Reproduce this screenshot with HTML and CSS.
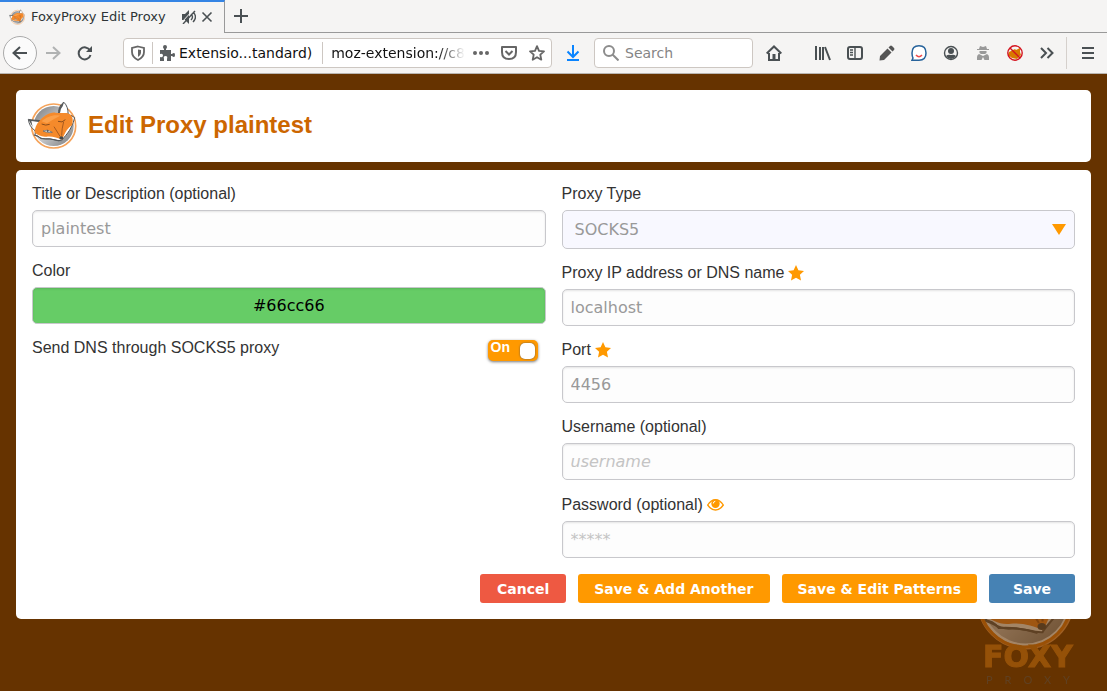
FILE: index.html
```html
<!DOCTYPE html>
<html lang="en">
<head>
    <meta charset="utf-8">
    <title>FoxyProxy Edit Proxy</title>
    <link rel="stylesheet" href="styles.css">
</head>
<body>
    <!-- shared fox logo -->
    <svg class="defs" width="0" height="0" aria-hidden="true">
        <defs>
            <linearGradient id="disc" x1="0" y1="0" x2="1" y2="1">
                <stop offset="0" stop-color="#77797b"/>
                <stop offset=".5" stop-color="#c9cacc"/>
                <stop offset="1" stop-color="#77797b"/>
            </linearGradient>
            <symbol id="fox" viewBox="50 48 150 150">
                <circle cx="130" cy="126" r="66" fill="#fff" stroke="#f5a35a" stroke-width="5"/>
                <circle cx="130" cy="126" r="60" fill="url(#disc)"/>
                <path d="M144 89C145 70 152 59 161 55C170 64 174 77 173 91Z" fill="#fff" stroke="#55585a" stroke-width="3"/>
                <path d="M144 86Q145 66 161 55L157 67Q150 74 149 87Z" fill="#55585a"/>
                <path d="M95 111C80 111 64 109 54 106C56 121 62 131 74 140Z" fill="#fff" stroke="#55585a" stroke-width="3"/>
                <path d="M54 106L98 109L86 114L63 111L67 129Z" fill="#55585a"/>
                <path d="M76 137L74 154C83 156 90 165 106 165C123 162 139 171 154 170C161 157 182 145 193 101L182 94Z" fill="#fff" stroke="#55585a" stroke-width="3"/>
                <path d="M88 110C100 97 117 84 135 86C153 90 168 83 179 91C188 98 189 110 185 124C174 130 164 144 156 167C141 161 124 156 109 158C94 160 80 153 73 145C73 132 78 120 88 110Z" fill="#f58a2b"/>
                <path d="M94 112C108 98 131 90 150 95C136 102 124 108 110 118Z" fill="#fba04a"/>
                <path d="M94 120Q106 126 118 121M143 112Q156 118 165 107" fill="none" stroke="#8a4d1c" stroke-width="3"/>
                <path d="M98 141Q111 134 126 145Q112 148 98 141Z" fill="#fff" stroke="#55585a" stroke-width="2"/>
                <circle cx="112" cy="141" r="3" fill="#55585a"/>
                <path d="M131 128L149 157M160 113Q154 135 154 155" fill="none" stroke="#a85b1f" stroke-width="3"/>
                <ellipse cx="153" cy="162" rx="6" ry="5" fill="#45484a"/>
                <path d="M70 153Q84 153 92 164Q119 162 147 171" fill="none" stroke="#55585a" stroke-width="3"/>
            </symbol>
        </defs>
    </svg>

    <nav class="tabs">
        <div class="tab">
            <svg class="icon" viewBox="50 48 150 150"><use href="#fox" x="50" y="48" width="150" height="150"/></svg>
            <span class="tab-title">FoxyProxy Edit Proxy</span>
            <button class="tab-button" aria-label="Unmute tab">
                <svg width="14" height="14" viewBox="0 0 14 14" fill="#4a5053"><path d="M0 4h3l4-4v14L3 10H0z"/><path d="M9 4q3 3 0 6M11 2q5 5 0 10M1 14L13 1" fill="none" stroke="#4a5053" stroke-width="1.4"/><path d="M0 12L11 0" stroke="#f5f4f3"/></svg>
            </button>
            <button class="tab-button" aria-label="Close tab">
                <svg width="12" height="12" viewBox="0 0 12 12" stroke="#4a5053" stroke-width="1.6"><path d="M1.500 1.500l9 9m0-9l-9 9"/></svg>
            </button>
        </div>
        <button class="new-tab" aria-label="New tab">
            <svg class="icon" viewBox="0 0 16 16" stroke="#4a5053" stroke-width="2"><path d="M8 1v14M1 8h14"/></svg>
        </button>
    </nav>

    <header class="toolbar">
        <button class="tool back" aria-label="Back"><svg class="icon" viewBox="0 0 16 16"><path class="line" d="M15 8H1m7-6L1.500 8 8 14"/></svg></button>
        <button class="tool forward" aria-label="Forward"><svg class="icon" viewBox="0 0 16 16"><path class="line" d="M1 8h14M8 2l6.500 6L8 14"/></svg></button>
        <button class="tool" aria-label="Reload"><svg class="icon" viewBox="0 0 16 16"><path class="line" d="M13 5.500A6 6 0 1 0 13.500 10"/><path d="M15 1v6H9z" fill="#4a5053"/></svg></button>

        <div class="address">
            <svg class="icon shield" viewBox="0 0 16 16"><path d="M8 1.500L14 3v4q0 5-6 8-6-3-6-8V3z" fill="none" stroke="#666" stroke-width="1.8"/><path d="M8 4.500L11 5v3q0 2-3 4z" fill="#666"/></svg>
            <span class="divider"></span>
            <svg class="icon" viewBox="0 0 16 16" fill="#5b5f61"><path d="M1 5h4V4Q4 3 4 2q0-2 2-2t2 2q0 1-1 2v1h5v4h1q1-1 2-1 1 0 1 2t-1 2q-1 0-2-1h-1v5H8v-2q1-3-1.500-3T5 14v2H1v-4q3 1 3-1.500T1 9z"/></svg>
            <span class="identity">Extensio...tandard)</span>
            <span class="divider"></span>
            <input class="url" type="text" aria-label="Address" value="moz-extension://c84d">
            <button class="inner" aria-label="Page actions"><svg class="icon" viewBox="0 0 16 16" fill="#666"><circle cx="2" cy="8" r="2"/><circle cx="8" cy="8" r="2"/><circle cx="14" cy="8" r="2"/></svg></button>
            <button class="inner" aria-label="Save to Pocket"><svg class="icon" viewBox="0 0 16 16" fill="none" stroke="#666" stroke-width="2"><path d="M1 2h14v5q0 7-7 7T1 7z" stroke-linejoin="round"/><path d="M4.500 6L8 9.500 11.500 6"/></svg></button>
            <button class="inner" aria-label="Bookmark"><svg class="icon" viewBox="0 0 16 16" fill="none" stroke="#666" stroke-width="1.8" stroke-linejoin="round"><path d="M8 1.200l2 4.600 5 .5-3.700 3.400 1 5L8 12.200l-4.300 2.500 1-5L1 6.300l5-.5z"/></svg></button>
        </div>

        <button class="tool" aria-label="Downloads"><svg class="icon" viewBox="0 0 16 16" fill="none" stroke="#0a84ff" stroke-width="2"><path d="M8 0v11M2.500 6.500L8 12l5.500-5.500M2 15h12"/></svg></button>

        <div class="search">
            <svg class="icon" viewBox="0 0 16 16" fill="none" stroke="#8c8c8c" stroke-width="2"><circle cx="6" cy="6" r="5"/><path d="M9.500 9.500L15.500 15.500"/></svg>
            <input type="text" aria-label="Search" placeholder="Search">
        </div>

        <button class="tool" aria-label="Home"><svg class="icon" viewBox="0 0 16 16"><path class="line" d="M.7 8.500L8 1.500l7.300 7M3 8v7h10V8"/><path d="M6.500 15V9h3v6z" fill="#4a5053"/></svg></button>
        <div class="addons">
            <button class="tool" aria-label="Library"><svg class="icon" viewBox="0 0 16 16"><path class="line" d="M1 1v14M5 2v13M8 2v13M10 2l5 13"/></svg></button>
            <button class="tool" aria-label="Sidebars"><svg class="icon" viewBox="0 0 16 16"><rect class="line" x="1" y="2" width="14" height="12" rx="2"/><path d="M8 2v12M3 5h3M3 7.500h3M3 10h3" stroke="#4a5053" stroke-width="1.400"/></svg></button>
            <button class="tool" aria-label="Edit"><svg class="icon" viewBox="0 0 16 16" fill="#555"><path d="M11 1q1-1 2 0l2 2q1 1 0 2l-1.500 1.500-4-4zM8.500 3.500l4 4L5 15l-4.500.5L1 11z"/></svg></button>
            <button class="tool" aria-label="Assistant"><svg class="icon" viewBox="0 0 16 16" fill="#fff"><path d="M1 15.200l1-2.200Q1 11 1 8q0-7.200 7-7.200T15 8t-7 7.200z" stroke="#27639b" stroke-width="1.500"/><path d="M5 10q3 3.500 6 0" fill="none" stroke="#ef4c4c" stroke-width="1.500"/></svg></button>
            <button class="tool" aria-label="Account"><svg class="icon" viewBox="0 0 16 16"><circle cx="8" cy="8" r="6.500" fill="none" stroke="#4a5053" stroke-width="1.400"/><circle cx="8" cy="6" r="3" fill="#4a5053"/><path d="M3 11q2-2 5-1 3-1 5 1-2 3-5 3t-5-3z" fill="#4a5053"/></svg></button>
            <button class="tool" aria-label="Private mode"><svg class="icon" viewBox="0 0 16 16" fill="#999"><path d="M5 1l3 1 3-1 1 3h2v1H2V4h2zM4.500 6h7v2L10 9H6L4.500 8zM4 9l4 2 4-2q2 1 2 3v3H9.500L8 12l-1.500 3H2v-3q0-2 2-3z"/></svg></button>
            <button class="tool" aria-label="FoxyProxy disabled"><svg class="icon" viewBox="0 0 16 16"><path d="M2 7l2-1 4-2 1 1 4-2v4l1 3-4 4-5-1-4-3z" fill="#d97800"/><circle cx="8" cy="8" r="7.200" fill="none" stroke="#d41420" stroke-width="1.400"/><path d="M3 3l10 10" stroke="#d41420" stroke-width="1.400"/></svg></button>
            <button class="tool" aria-label="More tools"><svg class="icon" viewBox="0 0 16 16"><path class="line" d="M2 3l5 5-5 5M8.500 3l5 5-5 5"/></svg></button>
        </div>
        <button class="tool menu" aria-label="Menu"><svg class="icon" viewBox="0 0 16 16"><path class="line" d="M2 3h12M2 8h12M2 13h12"/></svg></button>
    </header>

    <main class="page">
        <svg class="watermark" viewBox="0 0 112 148" aria-hidden="true">
            <use href="#fox" x="0" y="3" width="106" height="106"/>
            <circle cx="56" cy="58" r="46" fill="none" stroke="#e87d10" stroke-width="3"/>
            <text class="mark-foxy" x="14" y="124">FOXY</text>
            <text class="mark-proxy" x="17" y="141">PROXY</text>
        </svg>

        <div class="card heading">
            <svg class="logo" viewBox="50 48 150 150" aria-hidden="true"><use href="#fox" x="50" y="48" width="150" height="150"/></svg>
            <h1>Edit Proxy plaintest</h1>
        </div>

        <form class="card" onsubmit="return false">
            <div class="columns">
                <div class="column">
                    <div class="field">
                        <label for="title">Title or Description (optional)</label>
                        <input type="text" id="title" value="plaintest">
                    </div>
                    <div class="field">
                        <label for="color">Color</label>
                        <input class="color" type="text" id="color" value="#66cc66">
                    </div>
                    <div class="switch-row">
                        <label for="proxyDNS">Send DNS through SOCKS5 proxy</label>
                        <span class="switch">
                            <input type="checkbox" id="proxyDNS" checked>
                            <span class="switch-text">On</span>
                            <span class="knob"></span>
                        </span>
                    </div>
                </div>
                <div class="column">
                    <div class="field">
                        <label for="proxyType">Proxy Type</label>
                        <select id="proxyType">
                            <option>SOCKS5</option>
                        </select>
                    </div>
                    <div class="field">
                        <label for="address">Proxy IP address or DNS name <svg class="star" viewBox="0 0 16 16"><path d="M8 0l2.400 5.200 5.600.7-4.100 3.900 1.100 5.700L8 12.700l-5 2.800 1.100-5.700L0 5.900l5.600-.7z"/></svg></label>
                        <input type="text" id="address" value="localhost">
                    </div>
                    <div class="field">
                        <label for="port">Port <svg class="star" viewBox="0 0 16 16"><path d="M8 0l2.400 5.200 5.600.7-4.100 3.900 1.100 5.700L8 12.700l-5 2.800 1.100-5.700L0 5.900l5.600-.7z"/></svg></label>
                        <input type="text" id="port" value="4456">
                    </div>
                    <div class="field">
                        <label for="username">Username (optional)</label>
                        <input type="text" id="username" placeholder="username">
                    </div>
                    <div class="field">
                        <label for="password">Password (optional) <svg class="eye" viewBox="0 0 17 17"><path d="M.7 9Q4 3.700 8.500 3.700T16.300 9Q13 14 8.500 14T.7 9z" fill="none" stroke="#f90" stroke-width="1.400"/><circle cx="8.500" cy="7.800" r="4.200"/><path d="M6.300 7.500q0-2 2-2.200" fill="none" stroke="#fff"/></svg></label>
                        <input type="password" id="password" placeholder="*****">
                    </div>
                </div>
            </div>
            <div class="buttons">
                <button type="button" class="cancel">Cancel</button>
                <button type="submit">Save &amp; Add Another</button>
                <button type="submit">Save &amp; Edit Patterns</button>
                <button type="submit" class="save">Save</button>
            </div>
        </form>
    </main>
</body>
</html>
```
FILE: styles.css
```css
* {
    box-sizing: border-box;
}

body {
    display: flex;
    flex-direction: column;
    min-height: 100vh;
    margin: 0;
    background: #630;
    color: #333;
    font-family: "DejaVu Sans", sans-serif;
    font-size: 14px;
}

.defs {
    position: absolute;
}

button {
    border: 0;
    padding: 0;
    background: none;
    font-family: inherit;
}

svg {
    display: block;
    flex: none;
}

.icon {
    width: 16px;
    height: 16px;
}

.line {
    fill: none;
    stroke: #4a5053;
    stroke-width: 2;
}

/* tab strip */
.tabs {
    display: flex;
    height: 33px;
    background: #f5f4f3;
}

.tab {
    display: flex;
    align-items: center;
    width: 225px;
    padding: 0 11px 2px 9px;
    border-top: 2px solid #3584e4;
    border-right: 1px solid #999;
}

.tab-title {
    flex: 1;
    margin-left: 6px;
    color: #2e3436;
    font-size: 13px;
    white-space: nowrap;
}

.tab-button {
    margin-left: 5px;
}

.new-tab {
    display: flex;
    flex: 1;
    align-items: center;
    padding-left: 8px;
    border-bottom: 1px solid #999;
}

/* toolbar */
.toolbar {
    display: flex;
    align-items: center;
    height: 41px;
    padding: 0 3px;
    background: #f5f4f3;
    border-bottom: 1px solid #b9b5b1;
}

.tool {
    display: flex;
    flex: none;
    align-items: center;
    justify-content: center;
    width: 32px;
    height: 32px;
}

.back {
    width: 34px;
    height: 34px;
    border: 1px solid #aaa;
    border-radius: 50%;
    background: #fbfbfb;
}

.forward {
    opacity: .4;
}

.address,
.search {
    display: flex;
    align-items: center;
    min-width: 0;
    height: 30px;
    border: 1px solid #cdc7c2;
    border-radius: 4px;
    background: #fff;
}

.address {
    flex: 1;
    margin: 0 5px 0 22px;
    padding: 0 6px;
}

.shield {
    margin-right: 6px;
}

.divider {
    width: 1px;
    height: 22px;
    margin-right: 6px;
    background: #cdc7c2;
}

.identity {
    margin: 0 10px 0 4px;
    color: #111;
    white-space: nowrap;
}

.address input,
.search input {
    flex: 1;
    min-width: 0;
    padding: 0;
    border: 0;
    background: none;
    color: #111;
    font-family: inherit;
    font-size: 14px;
}

.address .url {
    margin-right: 8px;
    padding-left: 2px;
    mask-image: linear-gradient(to right, #000 80%, transparent);
}

.inner {
    margin-left: 12px;
}

.url + .inner {
    margin-left: 0;
}

.search {
    flex: 0 1 159px;
    margin: 0 5px;
    padding: 0 8px;
    gap: 6px;
}

.search input::placeholder {
    color: #858585;
}

.addons {
    display: flex;
    margin-left: 17px;
}

.menu {
    width: 38px;
    margin-left: 3px;
    padding-left: 4px;
    border-left: 1px solid #d5d0cc;
}

/* page */
.page {
    position: relative;
    flex: 1;
    padding: 16px;
    font-family: "Liberation Sans", sans-serif;
    font-size: 16px;
}

.card {
    position: relative;
    padding: 16px;
    border-radius: 5px;
    background: #fff;
}

.heading {
    display: flex;
    align-items: center;
    gap: 11px;
    margin-bottom: 8px;
    padding: 10px 11px 12px;
}

.logo {
    width: 50px;
    height: 50px;
}

h1 {
    margin: 0;
    color: #c60;
    font-size: 24px;
    line-height: 28px;
}

.watermark {
    position: absolute;
    right: 26px;
    bottom: 0;
    width: 112px;
    height: 148px;
    opacity: .4;
    overflow: visible;
}

.mark-foxy {
    fill: #dc7f14;
    stroke: #dc7f14;
    font-family: "DejaVu Sans", sans-serif;
    font-size: 30px;
    font-weight: bold;
}

/* the wordmark is widely tracked */
.mark-proxy {
    fill: #555;
    font-family: Lato, sans-serif;
    font-size: 11px;
    letter-spacing: 12px;
}

.columns {
    display: grid;
    grid-template-columns: 1fr 1fr;
    gap: 16px;
}

.column,
.field {
    display: flex;
    flex-direction: column;
}

.column {
    gap: 16px;
}

.field {
    gap: 8px;
}

label {
    display: flex;
    align-items: center;
    gap: 4px;
    line-height: 16px;
}

.star {
    width: 16px;
    height: 16px;
    fill: #f90;
}

.eye {
    width: 17px;
    height: 17px;
    fill: #f90;
}

.field input,
select {
    width: 100%;
    height: 37px;
    padding: 0 8px;
    border: 1px solid #c8c8cc;
    border-radius: 5px;
    background: #fdfdfd;
    box-shadow: inset 0 1px 2px #e4e4e4;
    color: #999;
    font-family: "DejaVu Sans", sans-serif;
    font-size: 16px;
}

.field input::placeholder {
    color: #c4c4c4;
    font-style: italic;
}

.field input[type="password"]::placeholder {
    font-style: normal;
}

.field .color {
    background: #6c6;
    box-shadow: inset 0 1px 2px #5ab45a;
    color: #000;
    text-align: center;
}

select {
    height: 39px;
    padding: 0 12px;
    appearance: none;
    background: #f8f8ff url("data:image/svg+xml,%3Csvg xmlns='http://www.w3.org/2000/svg' width='14' height='11'%3E%3Cpath d='M0 0h14L7 11z' fill='%23f90'/%3E%3C/svg%3E") no-repeat right 8px center;
    box-shadow: none;
}

.switch-row {
    display: flex;
    align-items: flex-start;
    justify-content: space-between;
    padding-right: 8px;
}

.switch {
    position: relative;
    display: flex;
    align-items: center;
    justify-content: space-between;
    width: 50px;
    height: 21px;
    padding: 0 3px;
    border-radius: 5px;
    background: #f90;
    box-shadow: 0 1px 3px #777;
}

/* invisible checkbox covers the whole switch */
.switch input {
    position: absolute;
    inset: 0;
    width: 100%;
    height: 100%;
    margin: 0;
    opacity: 0;
}

.switch-text {
    align-self: flex-start;
    color: #fff;
    font-size: 14px;
    font-weight: bold;
    line-height: 14px;
}

.knob {
    width: 15px;
    height: 16px;
    border-radius: 5px;
    background: #fff;
    box-shadow: 0 0 2px #555;
}

.buttons {
    display: flex;
    justify-content: flex-end;
    gap: 12px;
    margin-top: 16px;
}

.buttons button {
    min-width: 86px;
    height: 29px;
    padding: 0 16px;
    border-radius: 3px;
    background: #f90;
    color: #fff;
    font-family: "DejaVu Sans", sans-serif;
    font-size: 14px;
    font-weight: bold;
}

.buttons .cancel {
    background: #ee5942;
}

.buttons .save {
    background: #4682b4;
}
```
